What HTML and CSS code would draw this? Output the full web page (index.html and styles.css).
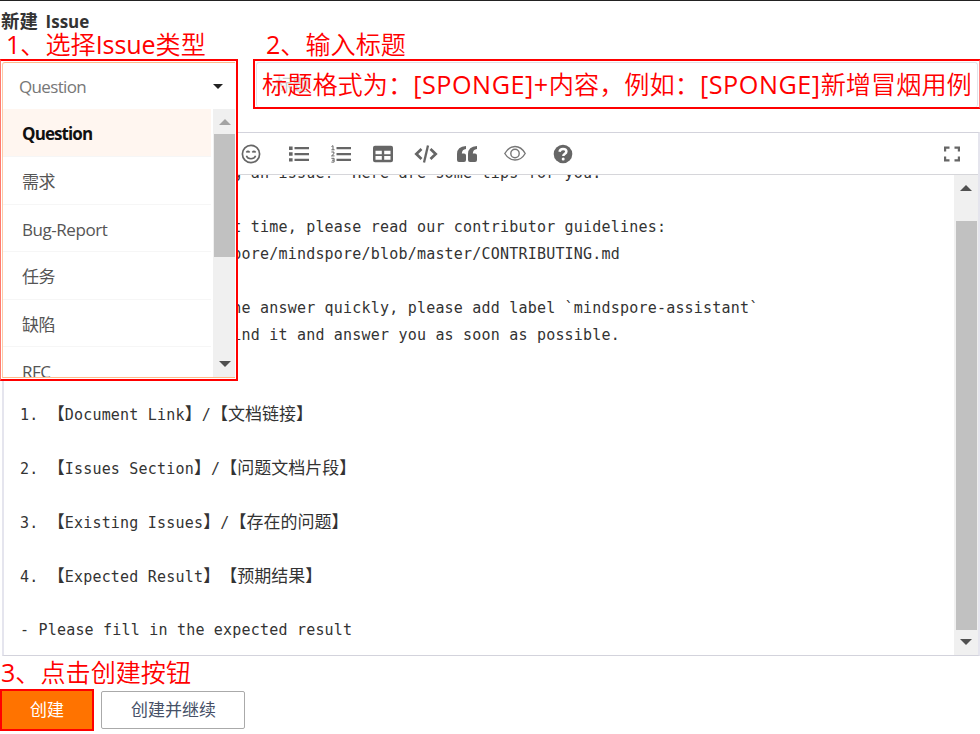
FILE: index.html
```html
<!DOCTYPE html>
<html lang="zh-CN">
<head>
<meta charset="utf-8">
<title>新建 Issue</title>
<link rel="stylesheet" href="styles.css">
</head>
<body>
<main class="page">
  <h1 class="heading">新建 <span>Issue</span></h1>
  <div class="fields">
    <section class="select">
      <div class="select-value"><span>Question</span><i class="caret"></i></div>
      <div class="menu">
        <ul class="options">
          <li class="active">Question</li>
          <li>需求</li>
          <li>Bug-Report</li>
          <li>任务</li>
          <li>缺陷</li>
          <li>RFC</li>
        </ul>
        <div class="bar menu-bar"><i class="up"></i><b class="thumb"></b><i class="down"></i></div>
      </div>
    </section>
    <div class="title-box"><div class="title-input">标题</div></div>
  </div>

  <section class="editor">
    <div class="toolbar">
      <svg class="icon smile" viewBox="0 0 20 20"><g fill="none" stroke="#666" stroke-width="1.700"><circle cx="10" cy="10" r="8.600"/><path d="M5.400 11.800c1.200 4 8 4 9.200 0" stroke-width="1.500"/><path d="M5.400 8.500q1.500-2.200 3.200 0M11.400 8.500q1.500-2.200 3.200 0" stroke-width="1.700"/></g></svg>
      <svg class="icon ul" viewBox="0 0 20 20"><path fill="#666" d="M0 2.500h3.600v3.400H0zM0 8.300h3.600v3.400H0zM0 14.200h3.600v3.400H0zM5.500 3H20v2.300H5.500zM5.500 8.900H20v2.300H5.500zM5.500 14.700H20V17H5.500z"/></svg>
      <svg class="icon ol" viewBox="0 0 20 20"><path fill="#666" d="M5.500 3H20v2.300H5.500zM5.500 8.900H20v2.300H5.500zM5.500 14.700H20V17H5.500z"/><path fill="none" stroke="#666" d="M.5 2.500L2 1.700v4M.4 5.800h3.200M.4 8h2.500v1.800L.5 11.900h3M.4 14.300h2.700v3.800H.4M1 16.200h2"/></svg>
      <svg class="icon table" viewBox="0 0 20 20"><path fill="#666" fill-rule="evenodd" d="M2 1.800h16q2 0 2 2v12.400q0 2-2 2H2q-2 0-2-2V3.800q0-2 2-2zm.5 4.900v3.600h6.300V6.700zm8.700 0v3.600h6.300V6.700zm-8.700 5.400v3.700h6.300v-3.700zm8.700 0v3.700h6.300v-3.700z"/></svg>
      <svg class="icon code" viewBox="0 0 24 20"><path fill="none" stroke="#666" stroke-width="2.700" d="M7.500 5L2.300 10l5.200 5M16.500 5l5.200 5-5.200 5"/><path stroke="#666" stroke-width="2.300" d="M14 1.500L10 18.500"/></svg>
      <svg class="icon quote" viewBox="0 0 20 20"><path fill="#666" d="M9 2v3Q5 5.400 4.800 9.500H7q2 0 2 2V16q0 2-2 2H2q-2 0-2-2v-6Q0 2.500 9 2z"/><path fill="#666" transform="translate(11)" d="M9 2v3Q5 5.400 4.800 9.500H7q2 0 2 2V16q0 2-2 2H2q-2 0-2-2v-6Q0 2.500 9 2z"/></svg>
      <svg class="icon eye" viewBox="0 0 22 20"><g fill="none" stroke="#777" stroke-width="1.400"><path d="M.8 9.500C6 .2 16 .2 21.200 9.500 16 18.200 6 18.200.8 9.500z"/><circle cx="11" cy="9.500" r="4.200"/></g></svg>
      <svg class="icon help" viewBox="0 0 20 20"><circle cx="10" cy="10" r="9.300" fill="#666"/><path d="M6.500 7.800Q7 5 10 5q3.400 0 3.400 2.600 0 1.400-1.600 2.200-1.500.8-1.500 2.300" fill="none" stroke="#fff" stroke-width="2.500"/><circle cx="10.200" cy="14.900" r="1.500" fill="#fff"/></svg>
      <svg class="icon full" viewBox="0 0 16 16"><path fill="none" stroke="#666" stroke-width="2.200" d="M1.100 5.500V1.600h4.400M10.500 1.600h4.400v3.900M14.900 10.500v3.900h-4.400M5.500 14.400H1.100v-3.900"/></svg>
    </div>
    <div class="editor-body">
      <div class="source">
        <p>&lt;!--  Thanks for sending an issue!  Here are some tips for you:</p>
        <p></p>
        <p>1. If this is your first time, please read our contributor guidelines:</p>
        <p>https://gitee.com/mindspore/mindspore/blob/master/CONTRIBUTING.md</p>
        <p></p>
        <p>2. If you want to get the answer quickly, please add label `mindspore-assistant`</p>
        <p>   We will be able to find it and answer you as soon as possible.</p>
        <p></p>
        <p class="short"></p>
        <p>1. <span>【</span>Document Link<span>】</span>/<span>【文档链接】</span></p>
        <p></p>
        <p>2. <span>【</span>Issues Section<span>】</span>/<span>【问题文档片段】</span></p>
        <p></p>
        <p>3. <span>【</span>Existing Issues<span>】</span>/<span>【存在的问题】</span></p>
        <p></p>
        <p>4. <span>【</span>Expected Result<span>】【预期结果】</span></p>
        <p></p>
        <p>- Please fill in the expected result</p>
      </div>
      <div class="bar body-bar"><i class="up"></i><b class="thumb"></b><i class="down"></i></div>
    </div>
  </section>

  <div class="actions">
    <button class="create">创建</button>
    <button class="more">创建并继续</button>
  </div>

  <div class="note n1"><span class="d">1</span>、选择<span class="l">Issue</span>类型</div>
  <div class="note n2"><span class="d">2</span>、输入标题</div>
  <div class="note n3">标题格式为：<span class="w">[SPONGE]+</span>内容，例如：<span class="w">[SPONGE]</span>新增冒烟用例</div>
  <div class="note n4"><span class="d">3</span>、点击创建按钮</div>
</main>
</body>
</html>
```
FILE: styles.css
```css
* { box-sizing: border-box; }
body { margin: 0; background: #fff; overflow: hidden; }
.page {
  position: relative;
  width: 980px;
  height: 734px;
  overflow: hidden;
  border-top: 1px solid #222;
  font-family: "Open Sans", "Noto Sans CJK SC", sans-serif;
  text-spacing-trim: space-all;
}
.heading { margin: 0; height: 58px; padding: 8px 0 0 1px; font-size: 18.4px; line-height: 24px; color: #333; word-spacing: 3px; }
.heading span { font-size: 17px; }
.fields { display: flex; gap: 15px; height: 73px; }

.select {
  position: relative;
  z-index: 2;
  flex: none;
  width: 238px;
  height: 322px;
  padding: 1px;
  border: 2px solid #f00;
  border-left: 1px solid #ff7a70;
  background: #fff;
}
.select-value {
  display: flex;
  align-items: center;
  justify-content: space-between;
  height: 47px;
  padding: 0 12px 0 16px;
  border-top: 1px solid #ffb98a;
  border-left: 1px solid #ffc9a4;
  border-radius: 3px 0 0 0;
  font-size: 17px;
  letter-spacing: -.65px;
  color: #777;
}
.caret { border: 5px solid transparent; border-top-color: #222; border-bottom: 0; }
.menu { display: flex; height: 269px; border-left: 1px solid #ffc9a4; border-bottom: 1px solid #ffb98a; overflow: hidden; }
.options { flex: 1; margin: 0; padding: 0; list-style: none; font-size: 17px; letter-spacing: -.45px; color: #555; }
.options li { height: 47.5px; padding: 1px 0 0 19px; line-height: 48px; border-bottom: 1px solid #f6f6f6; }
.options .active { height: 48px; background: #fff6f0; color: #111; font-weight: 700; letter-spacing: -.9px; }

.bar { display: flex; flex-direction: column; align-items: center; background: #f0f0f0; }
.up { border: 6px solid transparent; border-bottom-color: #505050; border-top: 0; }
.down { border: 6px solid transparent; border-top-color: #505050; border-bottom: 0; }
.thumb { background: #c1c1c1; }
.menu-bar { width: 22px; margin-left: 2px; }
.menu-bar .up { margin: 10px 0 0 2px; border-bottom-color: #a3a3a3; }
.menu-bar .thumb { width: 21px; height: 123px; margin: 9px 0 104px 1px; }
.menu-bar .down { margin-left: 2px; }

.title-box { flex: none; width: 728px; height: 50px; padding: 1px; border: 2px solid #f00; border-right-color: #f88; }
.title-input { height: 45px; padding-left: 18px; border: 1px solid #e2e2ea; border-bottom: 0; border-radius: 3px; font-size: 17px; line-height: 44px; color: #ccc; }

.editor { width: 978px; height: 524px; margin-left: 2px; border: 1px solid #d3d3dc; border-left: 2px solid #e5e5ee; border-right: 2px solid #e5e5ee; }
.toolbar { display: flex; align-items: center; height: 42px; padding: 0 18px 0 237px; border-bottom: 1px solid #d6d6da; }
.icon { flex: none; width: 20px; height: 20px; }
.ul { margin-left: 28px; }
.ol, .table { margin-left: 22px; }
.code { width: 24px; margin-left: 21px; }
.quote { margin-left: 19px; }
.eye { width: 22px; margin-left: 27px; }
.help { margin-left: 27px; }
.full { width: 16px; height: 16px; margin-left: auto; }
.editor-body { display: flex; height: 480px; overflow: hidden; }
.source { flex: 1; margin-top: -15px; padding-left: 16px; font-family: "DejaVu Sans Mono", "Noto Sans CJK SC", monospace; font-size: 15px; letter-spacing: .2px; color: #333; }
.source p { height: 27px; margin: 0; line-height: 27px; white-space: pre; }
.source .short { height: 26px; }
.source p:last-child { margin-top: -1px; }
.source span { font-family: "Noto Sans CJK SC", sans-serif; font-size: 17px; line-height: 20px; letter-spacing: 0; }
.body-bar { flex: none; width: 24px; }
.body-bar .up { margin-top: 10px; }
.body-bar .thumb { width: 21px; height: 409px; margin: 30px 0 9px; }

.actions { display: flex; align-items: center; gap: 7px; height: 42px; margin-top: 33px; }
button { padding: 0 0 3px; font: 17px "Noto Sans CJK SC", sans-serif; }
.create { width: 94px; height: 42px; border: 2px solid #f00; background: #ff7300; color: #fff; }
.more { width: 144px; height: 38px; padding-left: 1px; border: 1px solid #aaa; border-radius: 2px; background: #fff; color: #465067; }

.note { position: absolute; z-index: 3; color: #f00; font-family: "Open Sans", "Noto Sans CJK SC", sans-serif; font-size: 25.1px; line-height: 34px; white-space: nowrap; font-weight: 350; }
.note span { font-weight: 400; }
.l { letter-spacing: -.1px; }
.w { letter-spacing: .55px; }
.n1 { left: 6px; top: 26px; }
.n2 { left: 266px; top: 26px; }
.n3 { left: 262px; top: 66px; font-size: 25.2px; }
.n4 { left: 1px; top: 654px; }
```
